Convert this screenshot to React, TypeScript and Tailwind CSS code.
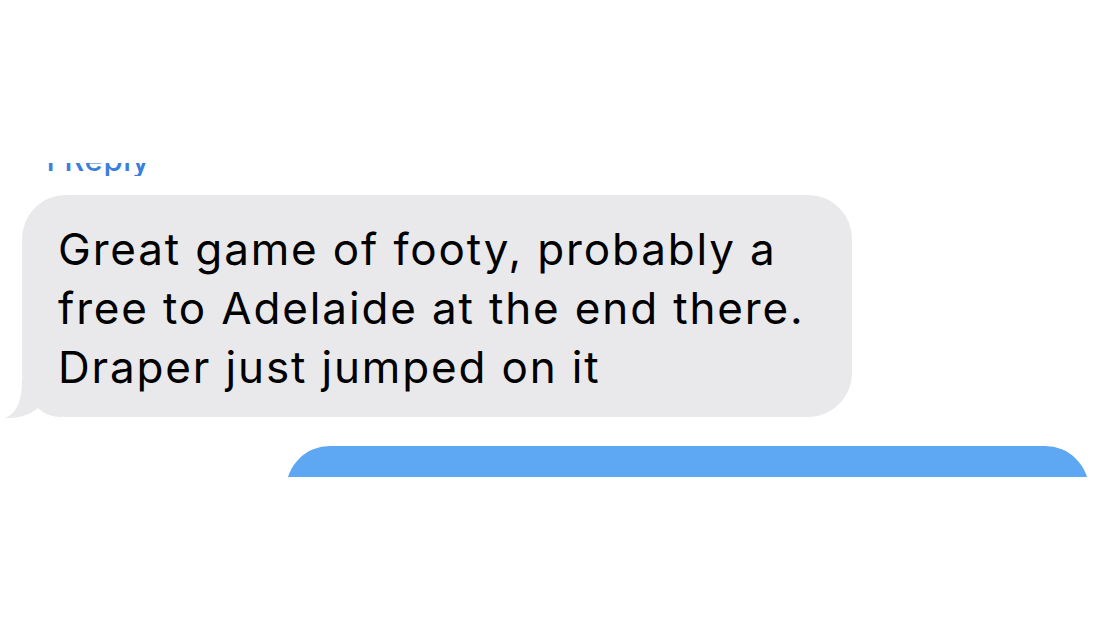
export default function App() {
  return (
    <div
      className="w-[1108px] h-[623px] bg-white overflow-hidden flex flex-col pt-[163px]"
      style={{ fontFamily: 'Inter, "Liberation Sans", Arial, sans-serif' }}
    >
      {/* cropped "1 Reply" label */}
      <div className="h-[13px] overflow-hidden pl-[42px]">
        <div className="-mt-[19px] text-[31px] leading-none font-medium tracking-[0.6px] text-[#3b7fdc] whitespace-nowrap">
          1 Reply
        </div>
      </div>

      {/* incoming bubble */}
      <div className="relative mt-[19px] ml-[22px] w-[830px]">
        <div className="relative z-10 rounded-[44px] bg-[#e9e9eb] pl-[36px] pr-6 pt-[25px] pb-[20px] text-[44px] leading-[59px] tracking-[1.85px] text-black whitespace-nowrap">
          Great game of footy, probably a
          <br />
          free to Adelaide at the end there.
          <br />
          Draper just jumped on it
        </div>
        <svg
          className="absolute z-0 left-[-18px] bottom-[-1px]"
          width="60"
          height="40"
          viewBox="0 0 60 40"
        >
          <path
            d="M18 0 L18 2 C18 24 12 36 1 40 C12 40.5 25 38 34 30 C40 36 48 39 58 39 L58 0 Z"
            fill="#e9e9eb"
          />
        </svg>
      </div>

      {/* outgoing bubble, cut off by the crop */}
      <div className="mt-[29px] ml-[286px] w-[803px] h-[31px] overflow-hidden">
        <div className="h-[120px] rounded-[44px] bg-[#5ea7f2]" />
      </div>
    </div>
  );
}
